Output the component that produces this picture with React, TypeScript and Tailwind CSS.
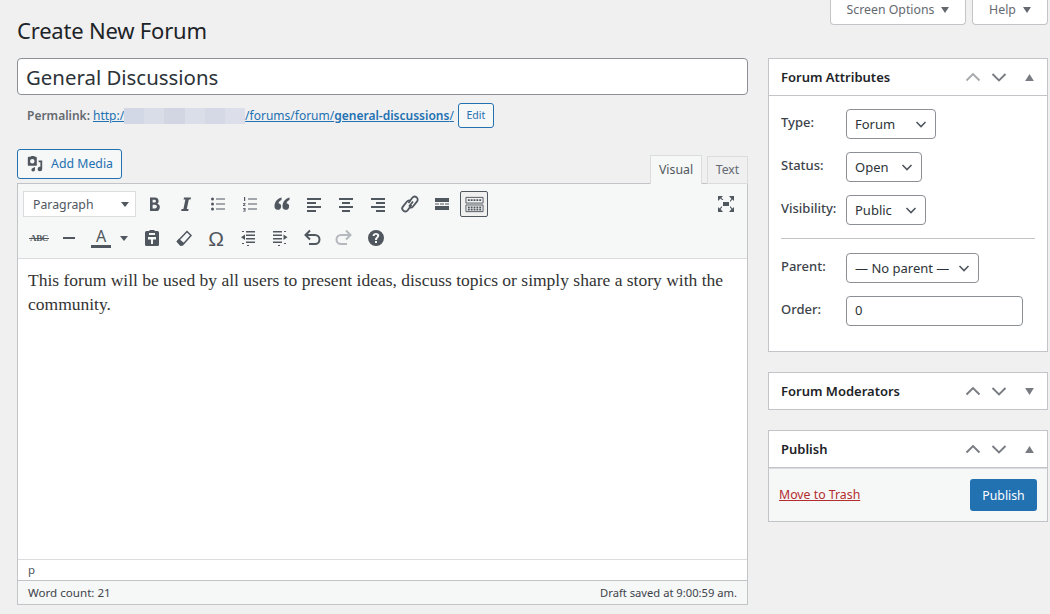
import type { ReactNode } from "react";

const ui = "font-['Noto_Sans','Open_Sans',sans-serif]";

function Glyph({ children, className = "" }: { children: ReactNode; className?: string }) {
  return (
    <svg viewBox="0 0 20 20" className={`w-5 h-5 ${className}`} fill="currentColor">
      {children}
    </svg>
  );
}

function ToolButton({ children, active, className = "" }: { children: ReactNode; active?: boolean; className?: string }) {
  return (
    <div
      className={`w-[28px] h-[26px] mx-[2px] shrink-0 flex items-center justify-center rounded-[2px] text-[#50575e] ${className} ${
        active ? "border border-[#50575e] bg-[#f0f0f1]" : ""
      }`}
    >
      {children}
    </div>
  );
}

function Chevron() {
  return (
    <svg viewBox="0 0 16 16" className="w-4 h-4 text-[#50575e]" fill="none" stroke="currentColor" strokeWidth="1.6">
      <path d="M3.5 6l4.5 4.5L12.5 6" />
    </svg>
  );
}

function Select({ label, width }: { label: string; width: string }) {
  return (
    <div className={`${width} h-[30px] pl-2 pr-[6px] flex items-center justify-between border border-[#8c8f94] rounded-[4px] bg-white text-[13px] text-[#2c3338]`}>
      <span className="whitespace-nowrap mt-px">{label}</span>
      <Chevron />
    </div>
  );
}

function Row({ label, children }: { label: string; children: ReactNode }) {
  return (
    <div className="flex items-center h-[30px]">
      <span className="w-[65px] -mt-[3px] text-[13px] font-medium text-[#3c434a]">{label}</span>
      {children}
    </div>
  );
}

function BoxHeader({ title, open, topDisabled }: { title: string; open?: boolean; topDisabled?: boolean }) {
  return (
    <div className="h-[37px] flex items-center pl-[12px] border-b border-[#c3c4c7]">
      <h2 className="flex-1 mt-px text-[13px] font-semibold text-[#1d2327]">{title}</h2>
      <div className="flex items-center pr-[13px]">
        <svg viewBox="0 0 16 16" className={`w-4 h-4 mr-[10px] ${topDisabled ? "text-[#a7aaad]" : "text-[#787c82]"}`} fill="none" stroke="currentColor" strokeWidth="1.9">
          <path d="M1.500 11.500l6.500-6.500 6.500 6.500" />
        </svg>
        <svg viewBox="0 0 16 16" className="w-4 h-4 mr-[18px] text-[#787c82]" fill="none" stroke="currentColor" strokeWidth="1.9">
          <path d="M1.500 5l6.500 6.500L14.500 5" />
        </svg>
        <svg viewBox="0 0 10 8" className="w-[9px] h-[7px] text-[#787c82]" fill="currentColor">
          {open ? <path d="M5 0l5 8H0z" /> : <path d="M0 0h10L5 8z" />}
        </svg>
      </div>
    </div>
  );
}

const redaction = ["bg-[#d3d8e6]", "bg-[#d9dde8]", "bg-[#d2d6e3]", "bg-[#dadee8]", "bg-[#d5d9e5]", "bg-[#dcdfe9]"];

export default function App() {
  return (
    <div className={`${ui} w-[1050px] h-[614px] overflow-hidden bg-[#f0f0f1] text-[#3c434a] text-[12.3px]`}>
      <div className="flex justify-end gap-[6px] pr-[2px] h-[25px]">
        <div className="w-[136px] h-[25px] pb-[4px] flex items-center justify-center gap-[7px] bg-white border border-t-0 border-[#c3c4c7] rounded-b-[4px] text-[#646970]">
          Screen Options
          <span className="w-0 h-0 border-x-[4.5px] border-x-transparent border-t-[6px] border-t-[#646970]" />
        </div>
        <div className="w-[76px] h-[25px] pb-[4px] flex items-center justify-center gap-[7px] bg-white border border-t-0 border-[#c3c4c7] rounded-b-[4px] text-[#646970]">
          Help
          <span className="w-0 h-0 border-x-[4.5px] border-x-transparent border-t-[6px] border-t-[#646970]" />
        </div>
      </div>

      <div className="flex pl-[17px] pr-[2px] gap-[20px]">
        {/* main column */}
        <div className="w-[731px]">
          <h1 className="h-[33px] text-[22px] leading-[10px] tracking-[-0.2px] text-[#1d2327]">Create New Forum</h1>

          <div className="h-[37px] flex items-center px-2 pt-px bg-white border border-[#8c8f94] rounded-[4px] text-[20.4px] text-[#2c3338]">
            General Discussions
          </div>

          <div className="h-[33px] mt-[4px] pl-[10px] flex items-center text-[12px] text-[#646970]">
            <b className="font-semibold mr-[3px]">Permalink:</b>
            <a className="text-[#2271b1] underline">http:/</a>
            <span className="flex w-[121px] h-[16px]">
              {redaction.map((c) => (
                <span key={c} className={`flex-1 ${c}`} />
              ))}
            </span>
            <a className="text-[#2271b1] underline">
              /forums/forum/<span className="font-semibold">general-discussions</span>/
            </a>
            <div className="ml-1 w-[36px] h-[25px] flex items-center justify-center border border-[#2271b1] rounded-[3px] bg-[#f6f7f7] text-[10.5px] text-[#2271b1]">
              Edit
            </div>
          </div>

          <div className="h-[35px] mt-[17px] flex items-start justify-between">
            <div className="w-[105px] h-[30px] flex items-center justify-center gap-[7px] border border-[#2271b1] rounded-[3px] bg-[#f6f7f7] text-[#2271b1]">
              <svg viewBox="0 0 20 20" className="w-[18px] h-[18px] text-[#50575e]" fill="currentColor">
                <path d="M3 2h2l1-1h3l1 1h1a1 1 0 0 1 1 1v8a1 1 0 0 1-1 1H3a1 1 0 0 1-1-1V3a1 1 0 0 1 1-1zm4 2.500a2.500 2.500 0 1 0 0 5 2.500 2.500 0 0 0 0-5z" />
                <path d="M14 6h4v9.500a2.500 2.500 0 1 1-2-2.400V8h-2zM10 13.500v3a2 2 0 1 1-1.600-2v-1z" />
              </svg>
              Add Media
            </div>
            <div className="flex items-end h-[35px] gap-[5px] relative z-10">
              <div className="w-[52px] h-[29px] flex items-center justify-center border border-[#dcdcde] border-b-0 bg-[#f6f7f7] text-[#50575e]">Visual</div>
              <div className="w-[41px] h-[28px] flex items-center justify-center border border-[#dcdcde] bg-[#f0f0f1] text-[#646970]">Text</div>
            </div>
          </div>

          {/* editor */}
          <div className="h-[422px] -mt-px flex flex-col border border-[#c3c4c7] bg-white">
            <div className="h-[75px] shrink-0 bg-[#f6f7f7] border-b border-[#dcdcde] pl-[5px] pr-[7px] pt-[7px]">
              <div className="flex items-center h-[26px]">
                <div className="w-[113px] h-[26px] mr-[2px] flex items-center justify-between pl-[9px] pr-[5px] bg-white border border-[#dcdcde] text-[#50575e]">
                  <span className="mt-[2px]">Paragraph</span>
                  <span className="w-0 h-0 border-x-[4px] border-x-transparent border-t-[5px] border-t-[#50575e] mr-[1px]" />
                </div>
                <ToolButton>
                  <Glyph><path d="M6 3.500h5a3.500 3.500 0 0 1 2.400 6.200A3.800 3.800 0 0 1 11.500 17H6zm2.600 2.200v2.900H10.500a1.450 1.450 0 0 0 0-2.900zm0 5v3.800h2.400a1.900 1.900 0 0 0 0-3.800z" /></Glyph>
                </ToolButton>
                <ToolButton>
                  <Glyph><path d="M8 3.500h7l-.4 2h-1.800l-2 9.500h1.800L12.200 17H5.200l.4-2h1.800l2-9.500H7.600z" /></Glyph>
                </ToolButton>
                <ToolButton>
                  <Glyph>
                    <circle cx="4.500" cy="5" r="1.500" /><circle cx="4.500" cy="10" r="1.500" /><circle cx="4.500" cy="15" r="1.500" />
                    <path d="M8 4.500h9v1H8zM8 9.500h9v1H8zM8 14.500h9v1H8z" />
                  </Glyph>
                </ToolButton>
                <ToolButton>
                  <Glyph>
                    <path d="M8 4.500h9v1H8zM8 9.500h9v1H8zM8 14.500h9v1H8z" />
                    <path d="M4 3h1.200v4H4zM3 9h2.500v.8L4 11.200h1.500v.8H3v-.8l1.500-1.400H3zM3 14h2.500v3.500H3v-.7h1.500v-.7H3.500v-.7h1V14.700H3z" />
                  </Glyph>
                </ToolButton>
                <ToolButton>
                  <Glyph><path d="M9.500 3.500C5 4.800 2.500 8 2.500 12.500a3.300 3.300 0 1 0 4-3.200c.3-1.500 1.500-2.700 3-3.300zM17.500 3.500C13 4.800 10.500 8 10.500 12.500a3.300 3.300 0 1 0 4-3.200c.3-1.500 1.500-2.700 3-3.300z" /></Glyph>
                </ToolButton>
                <ToolButton>
                  <Glyph><path d="M3 4h14v2H3zM3 8h9v2H3zM3 12h14v2H3zM3 16h9v2H3z" /></Glyph>
                </ToolButton>
                <ToolButton>
                  <Glyph><path d="M3 4h14v2H3zM6 8h8v2H6zM3 12h14v2H3zM6 16h8v2H6z" /></Glyph>
                </ToolButton>
                <ToolButton>
                  <Glyph><path d="M3 4h14v2H3zM8 8h9v2H8zM3 12h14v2H3zM8 16h9v2H8z" /></Glyph>
                </ToolButton>
                <ToolButton>
                  <svg viewBox="0 0 20 20" className="w-5 h-5" fill="none" stroke="currentColor" strokeWidth="1.800">
                    <path d="M9 12.500L13 7.500" />
                    <path d="M8.500 9l3.800-5.200a3 3 0 0 1 4.200-.6 3 3 0 0 1 .6 4.200L13 12.500a3 3 0 0 1-3.500.9" />
                    <path d="M11.500 11L7.700 16.200a3 3 0 0 1-4.200.6 3 3 0 0 1-.6-4.200L7 7.500a3 3 0 0 1 3.500-.9" />
                  </svg>
                </ToolButton>
                <ToolButton>
                  <Glyph><path d="M3 4h14v4H3zM3 9.500h4v1H3zM8 9.500h4v1H8zM13 9.500h4v1h-4zM3 12h14v4H3z" /></Glyph>
                </ToolButton>
                <ToolButton active>
                  <svg viewBox="0 0 20 20" className="w-[19px] h-[19px]" fill="none" stroke="currentColor">
                    <path d="M1 2.500h18v6H1zM1 10.500h18v7H1z" />
                    <path d="M3 5.500h14M3 13h14M3 15.500h14" strokeWidth="1.800" strokeDasharray="2 1" />
                  </svg>
                </ToolButton>
                <div className="ml-auto w-[28px] h-[26px] flex items-center justify-center text-[#50575e]">
                  <Glyph>
                    <path d="M7 8h6v4H7zM2 2h5L5.300 3.700 7.500 6H6L4.600 4.500 3.500 5.500 2 7zM18 2v5l-1.500-1.500-1 1.100L14 8V6.400l1.500-1.300L13 2zM2 18v-5l1.500 1.500 1-1.100L6 12v1.600l-1.500 1.300L7 18zM18 18h-5l2.500-2.900L14 13.600V12l1.500 1.400 1 1.100L18 13z" />
                  </Glyph>
                </div>
              </div>

              <div className="flex items-center h-[26px] mt-[8px]">
                <ToolButton>
                  <span className="relative text-[9px] leading-none font-bold font-['Liberation_Serif',serif] tracking-[-0.3px]">
                    ABC
                    <span className="absolute left-[-1px] right-[-1px] top-[4px] h-px bg-[#50575e]" />
                  </span>
                </ToolButton>
                <ToolButton className="-translate-x-[2px]">
                  <Glyph><path d="M4 9h12v2H4z" /></Glyph>
                </ToolButton>
                <ToolButton className="-translate-x-[2px]">
                  <div className="flex flex-col items-center w-5">
                    <span className="text-[16px] leading-[16px] h-[16px]">A</span>
                    <span className="w-5 h-[3px] mt-px bg-[#50575e]" />
                  </div>
                </ToolButton>
                <div className="w-[17px] flex justify-start">
                  <span className="ml-[1px] w-0 h-0 border-x-[4px] border-x-transparent border-t-[5px] border-t-[#50575e]" />
                </div>
                <ToolButton>
                  <Glyph><path d="M7.500 3V2h5v1h3A1.500 1.500 0 0 1 17 4.500v12a1.500 1.500 0 0 1-1.500 1.500h-11A1.500 1.500 0 0 1 3 16.500v-12A1.500 1.500 0 0 1 4.500 3zM7 5v2h6V5zM6 9v2.500h3V16h2v-4.500h3V9z" /></Glyph>
                </ToolButton>
                <ToolButton>
                  <svg viewBox="0 0 20 20" className="w-5 h-5" fill="none" stroke="currentColor" strokeWidth="1.500">
                    <path d="M13 3.500l4 4-8.500 9.500h-2L3.500 13.500z" />
                    <path d="M3.500 13.500L7 17l2-2-4-3.300z" fill="currentColor" />
                  </svg>
                </ToolButton>
                <ToolButton>
                  <span className="text-[21px] leading-none font-['Liberation_Sans',sans-serif]">Ω</span>
                </ToolButton>
                <ToolButton>
                  <Glyph><path d="M8 3h9v1.500H8zM8 6.500h9V8H8zM8 10h9v1.500H8zM8 13.500h9V15H8zM3 9.200L7 6.500v5.500zM4 3h2v1H4zM4 15h2v1H4zM9 17h2v1H9z" /></Glyph>
                </ToolButton>
                <ToolButton>
                  <Glyph><path d="M3 3h9v1.500H3zM3 6.500h9V8H3zM3 10h9v1.500H3zM3 13.500h9V15H3zM17.500 9.200L13.500 6.500v5.500zM14 3h2v1h-2zM14 15h2v1h-2zM8 17h2v1H8z" /></Glyph>
                </ToolButton>
                <ToolButton>
                  <svg viewBox="0 0 20 20" className="w-5 h-5" fill="none" stroke="currentColor" strokeWidth="2">
                    <path d="M4 7h9a4 4 0 0 1 0 9H7" />
                    <path d="M8 2.500L3.500 7 8 11.500" fill="none" />
                  </svg>
                </ToolButton>
                <ToolButton>
                  <svg viewBox="0 0 20 20" className="w-5 h-5 text-[#b4b9be]" fill="none" stroke="currentColor" strokeWidth="2">
                    <path d="M16 7H7a4 4 0 0 0 0 9h6" />
                    <path d="M12 2.500L16.500 7 12 11.500" />
                  </svg>
                </ToolButton>
                <ToolButton>
                  <Glyph>
                    <path fillRule="evenodd" d="M10 2a8 8 0 1 1 0 16 8 8 0 0 1 0-16zM9 13v2h2v-2zM10 5c-2 0-3.300 1-3.500 3h2.100c.1-.8.600-1.200 1.300-1.200s1.200.4 1.200 1c0 1.300-2.100 1.500-2.100 4.200h2c0-2 2.300-2.200 2.300-4.400C13.300 6 11.900 5 10 5z" />
                  </Glyph>
                </ToolButton>
              </div>
            </div>

            <div className="flex-1 px-[10px] pt-[9px] text-[17.5px] leading-[24px] text-[#333] font-['Liberation_Serif',serif]">
              This forum will be used by all users to present ideas, discuss topics or simply share a story with the community.
            </div>

            <div className="h-[21px] shrink-0 flex items-center pl-[10px] border-t border-[#dcdcde] text-[11.5px] text-[#50575e]">p</div>
            <div className="h-[24px] shrink-0 pt-px flex items-center justify-between px-[10px] border-t border-[#c3c4c7] bg-[#f6f7f7] text-[#3c434a]">
              <span className="text-[11.6px]">Word count: 21</span>
              <span className="text-[11.2px]">Draft saved at 9:00:59 am.</span>
            </div>
          </div>
        </div>

        {/* sidebar */}
        <div className="w-[280px] pt-[33px] flex flex-col gap-[20px]">
          <div className="h-[294px] border border-[#c3c4c7] bg-white">
            <BoxHeader title="Forum Attributes" open topDisabled />
            <div className="px-[12px] pt-[13px]">
              <div className="flex flex-col gap-[13px]">
                <Row label="Type:"><Select label="Forum" width="w-[90px]" /></Row>
                <Row label="Status:"><Select label="Open" width="w-[76px]" /></Row>
                <Row label="Visibility:"><Select label="Public" width="w-[80px]" /></Row>
              </div>
              <div className="h-px bg-[#c3c4c7] mt-[13px] mb-[14px]" />
              <div className="flex flex-col gap-[13px]">
                <Row label="Parent:"><Select label="— No parent —" width="w-[133px]" /></Row>
                <Row label="Order:">
                  <div className="w-[177px] h-[30px] flex items-center px-2 border border-[#8c8f94] rounded-[4px] bg-white text-[13px] text-[#2c3338]">0</div>
                </Row>
              </div>
            </div>
          </div>

          <div className="h-[38px] border border-[#c3c4c7] bg-white">
            <BoxHeader title="Forum Moderators" topDisabled={false} />
          </div>

          <div className="h-[92px] border border-[#c3c4c7] bg-white flex flex-col">
            <BoxHeader title="Publish" open />
            <div className="flex-1 flex items-center justify-between px-[10px] bg-[#f6f7f7] border-t border-[#dcdcde]">
              <a className="text-[#b32d2e] underline">Move to Trash</a>
              <div className="w-[67px] h-[32px] pt-[2px] flex items-center justify-center rounded-[3px] bg-[#2271b1] text-white">Publish</div>
            </div>
          </div>
        </div>
      </div>
    </div>
  );
}
